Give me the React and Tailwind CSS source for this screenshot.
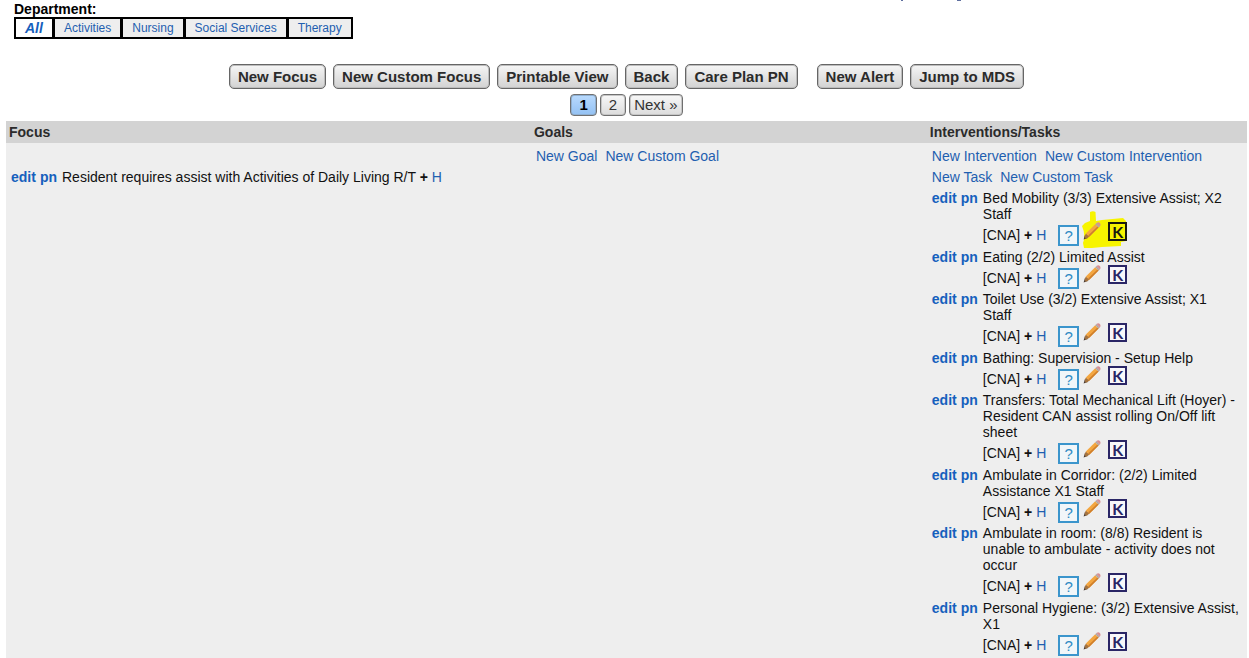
import React from "react";

const link = "text-[#1f5fb0] hover:underline";

const departments = ["Activities", "Nursing", "Social Services", "Therapy"];

const interventions = [
  { text: "Bed Mobility (3/3) Extensive Assist; X2 Staff", marked: true },
  { text: "Eating (2/2) Limited Assist" },
  { text: "Toilet Use (3/2) Extensive Assist; X1\nStaff" },
  { text: "Bathing: Supervision - Setup Help" },
  { text: "Transfers: Total Mechanical Lift (Hoyer) - Resident CAN assist rolling On/Off lift sheet" },
  { text: "Ambulate in Corridor: (2/2) Limited Assistance X1 Staff" },
  { text: "Ambulate in room: (8/8) Resident is unable to ambulate - activity does not occur" },
  { text: "Personal Hygiene: (3/2) Extensive Assist, X1" },
];

function EditLinks() {
  return (
    <span className="flex shrink-0 gap-1 font-bold text-[#1560bd]">
      <a href="#edit" className="hover:underline">edit</a>
      <a href="#pn" className="hover:underline">pn</a>
    </span>
  );
}

function ActionButton({ children }) {
  return (
    <button
      type="button"
      className="h-[25px] rounded-[5px] border border-[#666] bg-linear-to-b from-[#f6f6f6] to-[#d2d2d2] px-2 text-[15px] leading-5 font-bold text-[#2b2b2b] shadow-[inset_0_0_0_1px_#bdbdbd]"
    >
      {children}
    </button>
  );
}

function PageButton({ children, current, narrow }) {
  const tone = current
    ? "from-[#b9dafd] to-[#93c1f3] font-bold text-black shadow-[inset_0_0_0_1px_#8fb0d2]"
    : "from-[#f8f8f8] to-[#dcdcdc] text-[#333] shadow-[inset_0_0_0_1px_#c6c6c6]";
  return (
    <button
      type="button"
      aria-current={current ? "page" : undefined}
      className={`h-[22px] rounded-[4px] border border-[#707070] bg-linear-to-b text-[15px] leading-5 ${tone} ${narrow ? "px-2" : "px-1"}`}
    >
      {children}
    </button>
  );
}

function Pencil() {
  return (
    <svg viewBox="0 0 18 18" className="size-[18px]" aria-hidden="true">
      <path d="M0.6 17.6 1.8 13.4 4.6 16Z" fill="#4a3a30" />
      <path d="M1.7 13.8 3 11.4 6.4 14.6 4.4 16.2 2.4 16.6Z" fill="#a5733f" />
      <path d="M2.8 11.6 12.2 2.2 15.600 5.600 6.300 14.8Z" fill="#f3a640" />
      <path d="M5.100 13.600 14.500 4.500 15.600 5.600 6.300 14.800Z" fill="#cf7f2c" />
      <path d="M12.200 2.200 13.400 1 16.900 4.400 15.600 5.600Z" fill="#b0a5a5" />
      <path d="M13.400 1Q15.300-.3 16.800 .9 18.200 2.500 16.900 4.400Z" fill="#d88f93" />
    </svg>
  );
}

function Highlight() {
  return (
    <svg
      viewBox="0 0 45 38"
      className="pointer-events-none absolute -top-[11px] left-6 h-[38px] w-[45px]"
      aria-hidden="true"
    >
      <path
        d="M8 1Q11-.5 13.500 1L14 10 20 9 41 7 44 10 44 30 39 31 39 35 20 36 10 37 2 37 1 32Q4 24 0 15L3 12 8 10Z"
        fill="#f7f400"
      />
    </svg>
  );
}

function Intervention({ text, marked }) {
  return (
    <li className="flex gap-[5px] odd:pb-px">
      <EditLinks />
      <div className="min-w-0 flex-1">
        <p className="whitespace-pre-line">{text}</p>
        <div className="flex h-[26px] items-center">
          <span>
            [CNA] <b>+</b> <a href="#history" className={link}>H</a>
          </span>
          <div className="relative ml-3 flex h-[26px]">
            {marked && <Highlight />}
            <button
              type="button"
              aria-label="Help"
              className="relative mt-[3px] flex size-[21px] items-center justify-center border-2 border-[#3b95cc] bg-[#f1f6f9] text-[15px] text-[#2f8ac4]"
            >
              ?
            </button>
            <button type="button" aria-label="Edit task" className="relative ml-1 size-[18px]">
              <Pencil />
            </button>
            <button
              type="button"
              aria-label="Kardex"
              className={`relative ml-[7px] flex size-[19px] items-center justify-center border-2 font-['Liberation_Sans_Narrow',Lato,sans-serif] text-base leading-4 font-bold ${marked ? "border-[#1a1a10] text-[#1a1a10]" : "border-[#2a2666] bg-[#f8f8fa] text-[#2a2666]"}`}
            >
              K
            </button>
          </div>
        </div>
      </div>
    </li>
  );
}

export default function App() {
  return (
    <main className="relative w-full bg-white pr-[2px] pl-[6px] font-['Liberation_Sans',Arial,sans-serif] text-sm leading-4 text-[#111]">
      <svg viewBox="0 0 64 2" className="absolute top-0 right-[284px] h-[2px] w-16" aria-hidden="true">
        <path d="M0 0H2V1H0ZM56 0H60V1H56Z" fill="#5f6f9f" />
      </svg>
      <header className="px-2 pt-[2px]">
        <h2 className="leading-[15px] font-bold text-black">Department:</h2>
        <nav className="flex w-fit gap-[3px] border-2 border-black bg-black text-xs leading-[18px]">
          <a href="#all" className="bg-white px-[9px] text-sm leading-[18px] font-bold text-[#1560bd] italic">All</a>
          {departments.map((name) => (
            <a key={name} href="#department" className="bg-[#eee] px-[9px] text-[#1f5fb0]">{name}</a>
          ))}
        </nav>
      </header>

      <div className="mt-[25px] flex justify-center gap-[7px]">
        <ActionButton>New Focus</ActionButton>
        <ActionButton>New Custom Focus</ActionButton>
        <ActionButton>Printable View</ActionButton>
        <ActionButton>Back</ActionButton>
        <div className="mr-3">
          <ActionButton>Care Plan PN</ActionButton>
        </div>
        <ActionButton>New Alert</ActionButton>
        <ActionButton>Jump to MDS</ActionButton>
      </div>
      <nav aria-label="Pages" className="mt-[5px] flex justify-center gap-[3px]">
        <PageButton current narrow>1</PageButton>
        <PageButton narrow>2</PageButton>
        <PageButton>Next »</PageButton>
      </nav>

      <table className="mt-[5px] w-full table-fixed border-collapse bg-[#eee]">
        <colgroup>
          <col className="w-[42.3%]" />
          <col className="w-[31.9%]" />
          <col />
        </colgroup>
        <thead>
          <tr className="bg-[#d3d3d3] text-left leading-[22px] text-[#2b2b2b]">
            <th className="p-0 pl-[3px]">Focus</th>
            <th className="p-0 pl-[3px]">Goals</th>
            <th className="p-0 pl-[3px]">Interventions/Tasks</th>
          </tr>
        </thead>
        <tbody>
          <tr className="align-top">
            <td className="pt-[26px] pl-[5px]">
              <div className="flex gap-[5px]">
                <EditLinks />
                <p>
                  Resident requires assist with Activities of Daily Living R/T <b>+</b>{" "}
                  <a href="#history" className={link}>H</a>
                </p>
              </div>
            </td>
            <td className="pt-[3px] pl-[5px] leading-[21px]">
              <div className="flex gap-2">
                <a href="#new-goal" className={link}>New Goal</a>
                <a href="#custom-goal" className={link}>New Custom Goal</a>
              </div>
            </td>
            <td className="pt-[3px] pl-[5px]">
              <div className="flex flex-wrap gap-x-2 leading-[21px]">
                <a href="#new-intervention" className={link}>New Intervention</a>
                <a href="#custom-intervention" className={link}>New Custom Intervention</a>
                <a href="#new-task" className={link}>New Task</a>
                <a href="#custom-task" className={link}>New Custom Task</a>
              </div>
              <ul className="mt-[2px]">
                {interventions.map((item) => (
                  <Intervention key={item.text} {...item} />
                ))}
              </ul>
            </td>
          </tr>
        </tbody>
      </table>
    </main>
  );
}
